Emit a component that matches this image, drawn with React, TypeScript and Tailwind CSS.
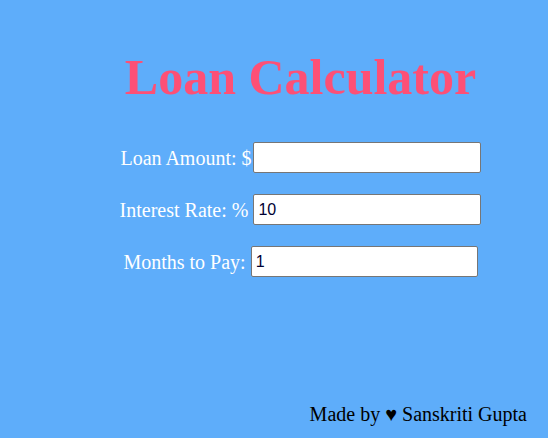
export default function App() {
  return (
    <div className="flex min-h-[438px] flex-col bg-[#5eadfa] font-['Liberation_Serif',serif]">
      <div className="flex flex-col items-center pl-[53px] pt-[47px]">
        <h1 className="text-[50px] font-bold leading-[60px] text-[#fd5076]">Loan Calculator</h1>
        <div className="mt-[35px] flex flex-col items-center gap-[21px] text-[20px] text-white">
          <label className="flex items-center">
            Loan Amount: $
            <input className="ml-px h-[31px] w-[228px] rounded-[2px] border border-[#767676] bg-white px-1 font-['Liberation_Sans',sans-serif] text-[16px] text-[#000033] outline-none" />
          </label>
          <label className="flex items-center">
            Interest Rate: %&nbsp;
            <input defaultValue="10" className="h-[31px] w-[228px] rounded-[2px] border border-[#767676] bg-white px-1 font-['Liberation_Sans',sans-serif] text-[16px] text-[#000033] outline-none" />
          </label>
          <label className="flex items-center">
            Months to Pay:&nbsp;
            <input defaultValue="1" className="h-[31px] w-[227px] rounded-[2px] border border-[#767676] bg-white px-1 font-['Liberation_Sans',sans-serif] text-[16px] text-[#000033] outline-none" />
          </label>
        </div>
      </div>
      <footer className="mt-auto pb-[9px] pr-[21px] text-right text-[20px] text-black">
        Made by ♥ Sanskriti Gupta
      </footer>
    </div>
  );
}
